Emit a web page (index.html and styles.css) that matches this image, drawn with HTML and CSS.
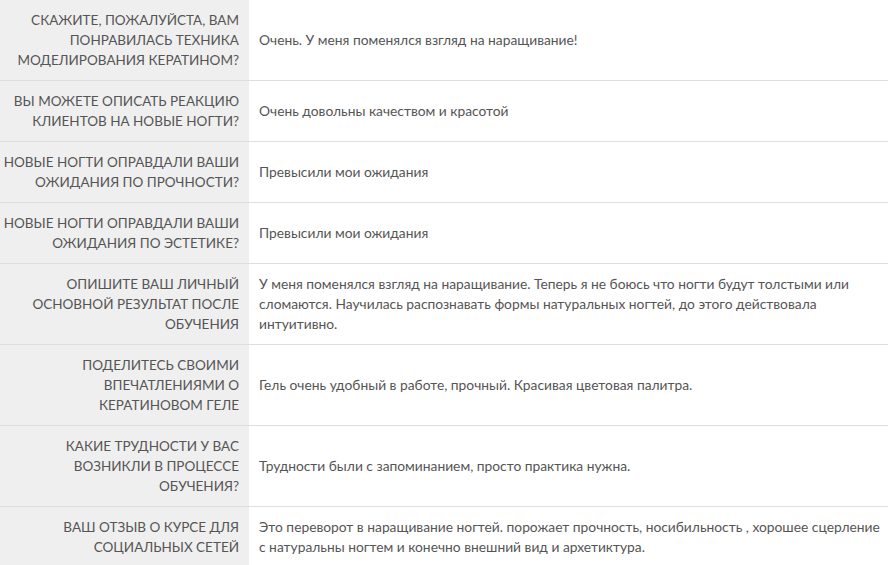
FILE: index.html
```html
<!DOCTYPE html>
<html lang="ru">
<head>
<meta charset="utf-8">
<link rel="stylesheet" href="styles.css">
</head>
<body>
<table class="qa">
  <colgroup>
    <col class="col-q">
    <col class="col-a">
  </colgroup>
  <tr>
    <th class="q">Скажите, пожалуйста, вам<br>понравилась техника<br>моделирования кератином?</th>
    <td class="a">Очень. У меня поменялся взгляд на наращивание!</td>
  </tr>
  <tr>
    <th class="q">Вы можете описать реакцию<br>клиентов на новые ногти?</th>
    <td class="a">Очень довольны качеством и красотой</td>
  </tr>
  <tr>
    <th class="q">Новые ногти оправдали ваши<br>ожидания по прочности?</th>
    <td class="a">Превысили мои ожидания</td>
  </tr>
  <tr>
    <th class="q">Новые ногти оправдали ваши<br>ожидания по эстетике?</th>
    <td class="a">Превысили мои ожидания</td>
  </tr>
  <tr>
    <th class="q">Опишите ваш личный<br>основной результат после<br>обучения</th>
    <td class="a">У меня поменялся взгляд на наращивание. Теперь я не боюсь что ногти будут толстыми или сломаются. Научилась распознавать формы натуральных ногтей, до этого действовала интуитивно.</td>
  </tr>
  <tr>
    <th class="q">Поделитесь своими<br>впечатлениями о<br>кератиновом геле</th>
    <td class="a">Гель очень удобный в работе, прочный. Красивая цветовая палитра.</td>
  </tr>
  <tr>
    <th class="q">Какие трудности у вас<br>возникли в процессе<br>обучения?</th>
    <td class="a">Трудности были с запоминанием, просто практика нужна.</td>
  </tr>
  <tr>
    <th class="q">Ваш отзыв о курсе для<br>социальных сетей</th>
    <td class="a">Это переворот в наращивание ногтей. порожает прочность, носибильность , хорошее сцерление с натуральны ногтем и конечно внешний вид и архетиктура.</td>
  </tr>
</table>
</body>
</html>
```

FILE: styles.css
```css
html, body {
  margin: 0;
  padding: 0;
  background: #ffffff;
}

.qa {
  border-collapse: collapse;
  table-layout: fixed;
  width: 888px;
  font-family: Lato, "Liberation Sans", Arial, sans-serif;
  color: #555555;
}

.col-q {
  width: 249px;
}

.qa tr {
  border-bottom: 1px solid #dedede;
}

.q {
  background: #efefef;
  text-align: right;
  text-transform: uppercase;
  font-weight: normal;
  font-size: 13.5px;
  line-height: 20px;
  white-space: nowrap;
  padding: 10px 10px 10px 2px;
  vertical-align: middle;
}

.a {
  font-size: 13.8px;
  line-height: 20px;
  padding: 10px 0 10px 10px;
  vertical-align: middle;
}
```
